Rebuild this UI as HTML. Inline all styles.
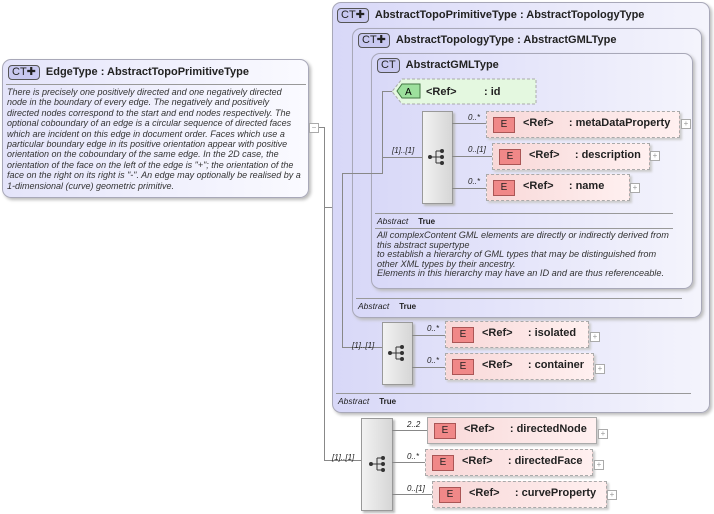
<!DOCTYPE html>
<html><head><meta charset="utf-8"><style>
body{margin:0;width:714px;height:514px;background:#fff;position:relative;overflow:hidden;font-family:"Liberation Sans",sans-serif;}
.a{position:absolute;}
.box{position:absolute;border:1px solid #a8a8b8;border-radius:9px;background:linear-gradient(to right,#d8d8f8,#f4f4fc);box-shadow:2px 2px 3px #bbb;}
.ttl{position:absolute;font-size:11px;font-weight:bold;color:#222;white-space:nowrap;}
.ct{display:inline-block;border:1px solid #555;border-radius:4px;background:#c8c8f0;font-size:11px;font-weight:normal;padding:0 3px;margin-right:6px;height:13px;line-height:13px;}
.hl{position:absolute;height:1px;background:#888;}
.vl{position:absolute;width:1px;background:#888;}
.abs{position:absolute;font-size:8.5px;font-style:italic;color:#222;}
.abs b{font-style:normal;margin-left:10px;font-size:8px}
.doc{position:absolute;font-size:9px;font-style:italic;color:#333;line-height:9.5px;white-space:nowrap;}
.el{position:absolute;border:1px dashed #aaa;background:linear-gradient(to right,#f8d8d8,#fff0f0);font-size:11px;font-weight:bold;color:#222;white-space:nowrap;box-shadow:2px 2px 2px #ccc;}
.el.s{border-style:solid;}
.eb{display:inline-block;width:20px;height:14px;border:1px solid #a55;background:#f08888;text-align:center;font-size:10px;font-weight:normal;line-height:14px;margin:5px 8px 0 6px;vertical-align:top;}
.el span.t{display:inline-block;margin-top:5px}
.pl{position:absolute;width:8px;height:8px;border:1px solid #aaa;background:#fff;font-size:8px;line-height:8px;text-align:center;color:#999;}
.seq{position:absolute;border:1px solid #999;background:linear-gradient(to right,#f2f2f2,#d6d6d6);box-shadow:2px 2px 2px #bbb;}
.m{position:absolute;font-size:8px;font-style:italic;color:#222;}
</style></head><body>

<!-- EdgeType -->
<div class="box" style="left:2px;top:59px;width:305px;height:137px;background:linear-gradient(to right,#e4e4fa,#fafaff);">
 <div class="ttl" style="left:5px;top:5px;"><span class="ct">CT✚</span>EdgeType : AbstractTopoPrimitiveType</div>
 <div class="hl" style="left:3px;top:24px;width:300px;background:#999"></div>
 <div class="doc" style="left:4px;top:27px;line-height:10.4px;">There is precisely one positively directed and one negatively directed<br>node in the boundary of every edge. The negatively and positively<br>directed nodes correspond to the start and end nodes respectively. The<br>optional coboundary of an edge is a circular sequence of directed faces<br>which are incident on this edge in document order. Faces which use a<br>particular boundary edge in its positive orientation appear with positive<br>orientation on the coboundary of the same edge. In the 2D case, the<br>orientation of the face on the left of the edge is "+"; the orientation of the<br>face on the right on its right is "-". An edge may optionally be realised by a<br>1-dimensional (curve) geometric primitive.</div>
</div>
<div class="pl" style="left:309px;top:123px;">−</div>
<div class="hl" style="left:319px;top:127px;width:6px"></div>
<div class="vl" style="left:324px;top:127px;height:334px"></div>
<div class="hl" style="left:324px;top:207px;width:19px"></div>
<div class="hl" style="left:324px;top:460px;width:37px"></div>

<!-- outer -->
<div class="box" style="left:332px;top:2px;width:376px;height:409px;">
 <div class="ttl" style="left:4px;top:5px;"><span class="ct">CT✚</span>AbstractTopoPrimitiveType : AbstractTopologyType</div>
 <div class="hl" style="left:3px;top:390px;width:355px;background:#999"></div>
 <div class="abs" style="left:5px;top:393px;">Abstract<b>True</b></div>
</div>
<div class="box" style="left:352px;top:28px;width:348px;height:288px;">
 <div class="ttl" style="left:5px;top:4px;"><span class="ct">CT✚</span>AbstractTopologyType : AbstractGMLType</div>
 <div class="hl" style="left:3px;top:269px;width:326px;background:#999"></div>
 <div class="abs" style="left:5px;top:272px;">Abstract<b>True</b></div>
</div>
<div class="box" style="left:371px;top:53px;width:320px;height:234px;">
 <div class="ttl" style="left:5px;top:4px;"><span class="ct">CT</span>AbstractGMLType</div>
 <div class="hl" style="left:3px;top:159px;width:298px;background:#999"></div>
 <div class="abs" style="left:5px;top:162px;">Abstract<b>True</b></div>
 <div class="hl" style="left:3px;top:174px;width:298px;background:#999"></div>
 <div class="doc" style="left:5px;top:177px;line-height:9.6px;font-size:9.2px;">All complexContent GML elements are directly or indirectly derived from<br>this abstract supertype<br>to establish a hierarchy of GML types that may be distinguished from<br>other XML types by their ancestry.<br>Elements in this hierarchy may have an ID and are thus referenceable.</div>
</div>

<!-- connectors -->
<div class="vl" style="left:342px;top:173px;height:175px"></div>
<div class="hl" style="left:342px;top:173px;width:40px"></div>
<div class="vl" style="left:382px;top:91px;height:83px"></div>
<div class="hl" style="left:382px;top:91px;width:12px"></div>
<div class="hl" style="left:382px;top:157px;width:40px"></div>
<div class="m" style="left:392px;top:146px;">[1]..[1]</div>
<div class="hl" style="left:342px;top:347px;width:40px"></div>
<div class="m" style="left:352px;top:341px;">[1]..[1]</div>
<div class="m" style="left:332px;top:453px;">[1]..[1]</div>

<!-- id attribute -->
<svg class="a" style="left:390px;top:78px" width="150" height="28"><polygon points="12,1 146,1 146,26 12,26 2,13.5" fill="#e4f8e0" stroke="#aaa" stroke-dasharray="3,2"/><polygon points="12,6 30,6 30,20 12,20 7,13" fill="#9de09d" stroke="#474"/><text x="15" y="17" font-family="Liberation Sans" font-size="10">A</text><text x="36" y="17" font-family="Liberation Sans" font-size="11" font-weight="bold" fill="#222">&lt;Ref&gt;</text><text x="94" y="17" font-family="Liberation Sans" font-size="11" font-weight="bold" fill="#222">: id</text></svg>

<!-- seq 1 -->
<div class="seq" style="left:422px;top:111px;width:29px;height:91px;"></div>
<svg class="a" style="left:427px;top:148px" width="20" height="18"><circle cx="3" cy="9" r="2" fill="#333"/><path d="M3 9H9M9 3V15M9 3H14M9 9H14M9 15H14" stroke="#333" fill="none"/><circle cx="15" cy="3" r="2" fill="#333"/><circle cx="15" cy="9" r="2" fill="#333"/><circle cx="15" cy="15" r="2" fill="#333"/></svg>
<div class="hl" style="left:452px;top:123px;width:34px"></div>
<div class="hl" style="left:452px;top:156px;width:40px"></div>
<div class="hl" style="left:452px;top:188px;width:34px"></div>
<div class="m" style="left:468px;top:113px;">0..*</div>
<div class="m" style="left:468px;top:145px;">0..[1]</div>
<div class="m" style="left:468px;top:177px;">0..*</div>
<div class="el" style="left:486px;top:111px;width:192px;height:25px;"><span class="eb">E</span><span class="t">&lt;Ref&gt; &nbsp;&nbsp;&nbsp;&nbsp;: metaDataProperty</span></div>
<div class="pl" style="left:681px;top:119px;">+</div>
<div class="el" style="left:492px;top:143px;width:156px;height:25px;"><span class="eb">E</span><span class="t">&lt;Ref&gt; &nbsp;&nbsp;&nbsp;&nbsp;: description</span></div>
<div class="pl" style="left:650px;top:151px;">+</div>
<div class="el" style="left:486px;top:174px;width:142px;height:25px;"><span class="eb">E</span><span class="t">&lt;Ref&gt; &nbsp;&nbsp;&nbsp;&nbsp;: name</span></div>
<div class="pl" style="left:630px;top:183px;">+</div>

<!-- seq 2 -->
<div class="seq" style="left:382px;top:322px;width:29px;height:61px;"></div>
<svg class="a" style="left:387px;top:344px" width="20" height="18"><circle cx="3" cy="9" r="2" fill="#333"/><path d="M3 9H9M9 3V15M9 3H14M9 9H14M9 15H14" stroke="#333" fill="none"/><circle cx="15" cy="3" r="2" fill="#333"/><circle cx="15" cy="9" r="2" fill="#333"/><circle cx="15" cy="15" r="2" fill="#333"/></svg>
<div class="hl" style="left:412px;top:335px;width:33px"></div>
<div class="hl" style="left:412px;top:367px;width:33px"></div>
<div class="m" style="left:427px;top:324px;">0..*</div>
<div class="m" style="left:427px;top:356px;">0..*</div>
<div class="el" style="left:445px;top:321px;width:142px;height:25px;"><span class="eb">E</span><span class="t">&lt;Ref&gt; &nbsp;&nbsp;&nbsp;&nbsp;: isolated</span></div>
<div class="pl" style="left:590px;top:332px;">+</div>
<div class="el" style="left:445px;top:353px;width:147px;height:25px;"><span class="eb">E</span><span class="t">&lt;Ref&gt; &nbsp;&nbsp;&nbsp;&nbsp;: container</span></div>
<div class="pl" style="left:595px;top:364px;">+</div>

<!-- seq 3 -->
<div class="seq" style="left:361px;top:418px;width:30px;height:91px;"></div>
<svg class="a" style="left:368px;top:455px" width="20" height="18"><circle cx="3" cy="9" r="2" fill="#333"/><path d="M3 9H9M9 3V15M9 3H14M9 9H14M9 15H14" stroke="#333" fill="none"/><circle cx="15" cy="3" r="2" fill="#333"/><circle cx="15" cy="9" r="2" fill="#333"/><circle cx="15" cy="15" r="2" fill="#333"/></svg>
<div class="hl" style="left:392px;top:430px;width:35px"></div>
<div class="hl" style="left:392px;top:462px;width:33px"></div>
<div class="hl" style="left:392px;top:494px;width:40px"></div>
<div class="m" style="left:407px;top:420px;">2..2</div>
<div class="m" style="left:407px;top:452px;">0..*</div>
<div class="m" style="left:407px;top:484px;">0..[1]</div>
<div class="el s" style="left:427px;top:417px;width:168px;height:25px;"><span class="eb">E</span><span class="t">&lt;Ref&gt; &nbsp;&nbsp;&nbsp;&nbsp;: directedNode</span></div>
<div class="pl" style="left:598px;top:429px;">+</div>
<div class="el" style="left:425px;top:449px;width:166px;height:25px;"><span class="eb">E</span><span class="t">&lt;Ref&gt; &nbsp;&nbsp;&nbsp;&nbsp;: directedFace</span></div>
<div class="pl" style="left:594px;top:460px;">+</div>
<div class="el" style="left:432px;top:481px;width:173px;height:25px;"><span class="eb">E</span><span class="t">&lt;Ref&gt; &nbsp;&nbsp;&nbsp;&nbsp;: curveProperty</span></div>
<div class="pl" style="left:607px;top:490px;">+</div>

</body></html>
